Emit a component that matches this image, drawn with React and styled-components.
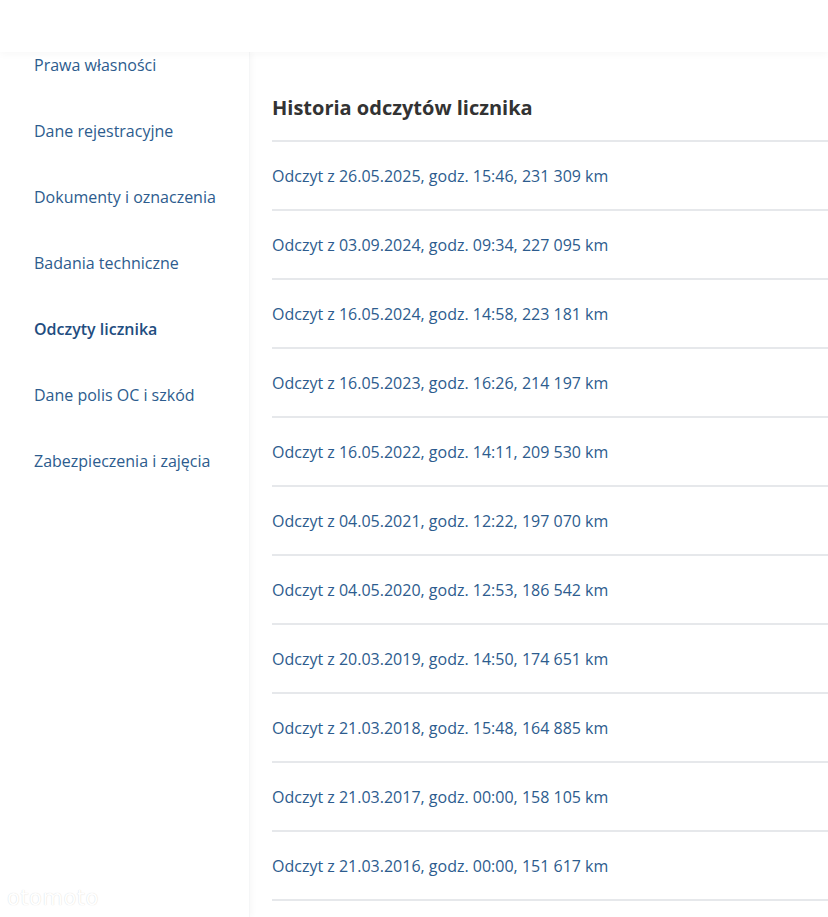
import React from "react";
import styled, { createGlobalStyle } from "styled-components";

const GlobalStyle = createGlobalStyle`
  html, body {
    margin: 0;
    padding: 0;
    background: #ffffff;
    font-family: "Open Sans", "Noto Sans", sans-serif;
    overflow: hidden;
  }
`;

const Page = styled.div`
  position: relative;
  width: 828px;
  height: 917px;
  overflow: hidden;
  background: #ffffff;
`;

const Header = styled.header`
  height: 52px;
  background: #ffffff;
  box-shadow: 0 2px 8px rgba(0, 0, 0, 0.035);
  position: relative;
  z-index: 2;
`;

const Body = styled.div`
  display: flex;
  align-items: stretch;
  height: 865px;
`;

const Sidebar = styled.nav`
  width: 250px;
  flex-shrink: 0;
  padding-top: 2px;
  background: #ffffff;
  box-shadow: 2px 0 6px rgba(0, 0, 0, 0.03);
  border-right: 1px solid #f5f6f7;
  box-sizing: border-box;
`;

const NavItem = styled.div`
  padding-left: 34px;
  font-size: 16px;
  line-height: 22px;
  margin-bottom: 44px;
  color: ${(p) => (p.$active ? "#1f4d80" : "#2d5c8e")};
  font-weight: ${(p) => (p.$active ? 600 : 400)};
`;

const Main = styled.main`
  flex: 1;
  padding-left: 22px;
`;

const Title = styled.h2`
  margin: 43px 0 19px;
  font-size: 20px;
  line-height: 26px;
  font-weight: 700;
  color: #333333;
`;

const Row = styled.div`
  height: 67px;
  border-top: 2px solid #e6e8eb;
  display: flex;
  align-items: center;
  font-size: 16px;
  color: #2d5c8e;
`;

const Watermark = styled.div`
  position: absolute;
  left: 7px;
  bottom: 7px;
  font-family: "DejaVu Sans", sans-serif;
  font-size: 21px;
  letter-spacing: 0.5px;
  color: #ffffff;
  text-shadow: 0 0 1px rgba(0, 0, 0, 0.18);
`;

const navItems = [
  "Prawa własności",
  "Dane rejestracyjne",
  "Dokumenty i oznaczenia",
  "Badania techniczne",
  "Odczyty licznika",
  "Dane polis OC i szkód",
  "Zabezpieczenia i zajęcia",
];

const readings = [
  "Odczyt z 26.05.2025, godz. 15:46, 231 309 km",
  "Odczyt z 03.09.2024, godz. 09:34, 227 095 km",
  "Odczyt z 16.05.2024, godz. 14:58, 223 181 km",
  "Odczyt z 16.05.2023, godz. 16:26, 214 197 km",
  "Odczyt z 16.05.2022, godz. 14:11, 209 530 km",
  "Odczyt z 04.05.2021, godz. 12:22, 197 070 km",
  "Odczyt z 04.05.2020, godz. 12:53, 186 542 km",
  "Odczyt z 20.03.2019, godz. 14:50, 174 651 km",
  "Odczyt z 21.03.2018, godz. 15:48, 164 885 km",
  "Odczyt z 21.03.2017, godz. 00:00, 158 105 km",
  "Odczyt z 21.03.2016, godz. 00:00, 151 617 km",
];

export default function App() {
  return (
    <Page>
      <GlobalStyle />
      <Header />
      <Body>
        <Sidebar>
          {navItems.map((item) => (
            <NavItem key={item} $active={item === "Odczyty licznika"}>
              {item}
            </NavItem>
          ))}
        </Sidebar>
        <Main>
          <Title>Historia odczytów licznika</Title>
          {readings.map((r) => (
            <Row key={r}>{r}</Row>
          ))}
          <Row />
        </Main>
      </Body>
      <Watermark>otomoto</Watermark>
    </Page>
  );
}
